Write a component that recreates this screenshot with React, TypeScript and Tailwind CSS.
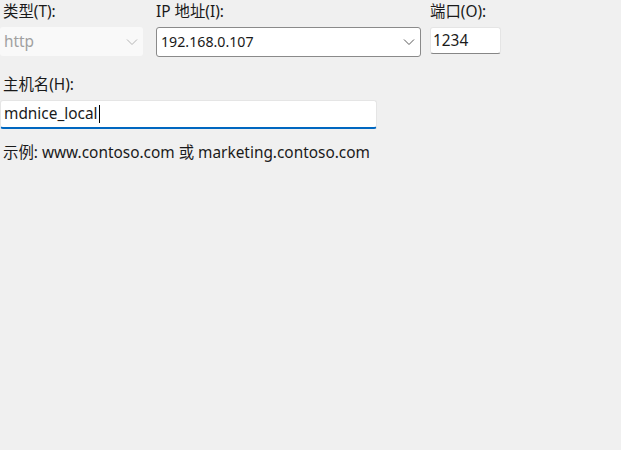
import React from "react";

const font = { fontFamily: '"Noto Sans", "Noto Sans CJK SC", sans-serif' };

function Chevron({ color }: { color: string }) {
  return (
    <svg width="12" height="8" viewBox="0 0 12 8" fill="none">
      <path d="M1 1.5 L6 6.5 L11 1.5" stroke={color} strokeWidth="1" />
    </svg>
  );
}

export default function App() {
  return (
    <div className="w-[621px] h-[450px] bg-[#f0f0f0] text-[#1a1a1a] text-[15.4px] leading-none" style={font}>
      <div className="flex pt-[4px]">
        <div className="flex flex-col w-[156px]">
          <div className="pl-[3px] h-[23px]">类型(T):</div>
          <div className="w-[143px] h-[29px] bg-[#f9f9f9] rounded-[3px] flex items-center justify-between pl-[4px] pr-[5px] text-[#a0a0a0]">
            <span>http</span>
            <Chevron color="#b5b5b5" />
          </div>
        </div>
        <div className="flex flex-col w-[274px]">
          <div className="h-[23px]">IP 地址(I):</div>
          <div className="w-[265px] h-[30px] bg-white border border-[#8a8a8a] rounded-[3px] flex items-center justify-between pl-[4px] pr-[5px]">
            <span className="text-[14.2px]">192.168.0.107</span>
            <Chevron color="#5a5a5a" />
          </div>
        </div>
        <div className="flex flex-col">
          <div className="h-[23px]">端口(O):</div>
          <div className="w-[71px] h-[27px] bg-white border border-[#e5e5e5] border-b-[#868686] rounded-[3px] flex items-center pl-[2px]">
            <span>1234</span>
          </div>
        </div>
      </div>
      <div className="mt-[20px] pl-[3px] h-[23px]">主机名(H):</div>
      <div className="w-[377px] h-[29px] bg-white border border-[#e5e5e5] border-b-2 border-b-[#0067c0] rounded-[3px] flex items-center pl-[3px]">
        <span>mdnice_local</span>
        <span className="w-px h-[18px] bg-black ml-px"></span>
      </div>
      <div className="pl-[3px] mt-[16px]">示例: www.contoso.com 或 marketing.contoso.com</div>
    </div>
  );
}
